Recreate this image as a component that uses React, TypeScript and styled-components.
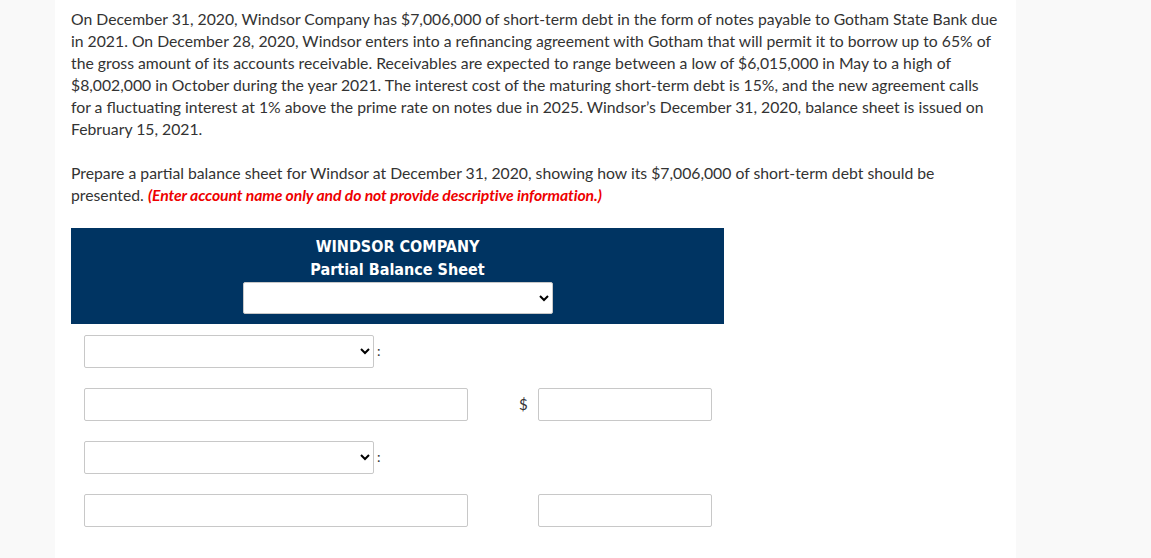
import React from "react";
import styled, { createGlobalStyle } from "styled-components";

const Global = createGlobalStyle`
  html, body { margin: 0; padding: 0; background: #f9f9f9; }
  body { font-family: Lato, "Open Sans", sans-serif; }
`;

const Page = styled.div`
  display: flex;
  min-height: 558px;
`;

const Panel = styled.main`
  margin-left: 55px;
  width: 961px;
  box-sizing: border-box;
  background: #ffffff;
  padding: 8px 15px 20px 16px;
  color: #333333;
  font-size: 15.75px;
  line-height: 22px;
`;

const Para = styled.p`
  margin: 0 0 22px 0;
`;

const Red = styled.span`
  color: #ee0000;
  font-weight: 700;
  font-style: italic;
  letter-spacing: -0.1px;
`;

const Sheet = styled.section`
  width: 653px;
`;

const Header = styled.div`
  background: #003462;
  height: 96px;
  box-sizing: border-box;
  padding-top: 7px;
  display: flex;
  flex-direction: column;
  align-items: center;
  color: #ffffff;
  font-family: "DejaVu Sans Condensed", "DejaVu Sans", sans-serif;
  font-weight: 700;
  font-size: 16px;
  line-height: 23px;
`;

const HeaderSelect = styled.select`
  margin-top: 1px;
  width: 310px;
  height: 32px;
  border: 1px solid #c8c8c8;
  border-radius: 2px;
  background: #fff;
  font-family: Lato, sans-serif;
`;

const Body = styled.div`
  padding: 11px 0 0 13px;
  display: flex;
  flex-direction: column;
  gap: 21px;
`;

const Row = styled.div`
  display: flex;
  align-items: center;
  height: 32px;
`;

const Select = styled.select`
  width: 290px;
  height: 33px;
  border: 1px solid #c8c8c8;
  border-radius: 2px;
  background: #fff;
  font-family: Lato, sans-serif;
`;

const Colon = styled.span`
  margin-left: 3px;
  font-size: 14px;
`;

const NameInput = styled.input`
  width: 384px;
  height: 33px;
  box-sizing: border-box;
  border: 1px solid #c8c8c8;
  border-radius: 2px;
  background: #fff;
`;

const Dollar = styled.span<{ $hidden?: boolean }>`
  width: 19px;
  margin-left: 51px;
  text-align: left;
  visibility: ${(p) => (p.$hidden ? "hidden" : "visible")};
  font-size: 15px;
`;

const AmountInput = styled.input`
  width: 174px;
  height: 33px;
  box-sizing: border-box;
  border: 1px solid #c8c8c8;
  border-radius: 2px;
  background: #fff;
`;

export default function App() {
  return (
    <Page>
      <Global />
      <Panel>
        <Para>
          On December 31, 2020, Windsor Company has $7,006,000 of short-term debt in the form of notes payable to Gotham State Bank due in 2021. On December 28, 2020, Windsor enters into a refinancing agreement with Gotham that will permit it to borrow up to 65% of the gross amount of its accounts receivable. Receivables are expected to range between a low of $6,015,000 in May to a high of $8,002,000 in October during the year 2021. The interest cost of the maturing short-term debt is 15%, and the new agreement calls for a fluctuating interest at 1% above the prime rate on notes due in 2025. Windsor’s December 31, 2020, balance sheet is issued on February 15, 2021.
        </Para>
        <Para>
          Prepare a partial balance sheet for Windsor at December 31, 2020, showing how its $7,006,000 of short-term debt should be presented. <Red>(Enter account name only and do not provide descriptive information.)</Red>
        </Para>
        <Sheet>
          <Header>
            <div>WINDSOR COMPANY</div>
            <div>Partial Balance Sheet</div>
            <HeaderSelect defaultValue="">
              <option value=""></option>
            </HeaderSelect>
          </Header>
          <Body>
            <Row>
              <Select defaultValue="">
                <option value=""></option>
              </Select>
              <Colon>:</Colon>
            </Row>
            <Row>
              <NameInput />
              <Dollar>$</Dollar>
              <AmountInput />
            </Row>
            <Row>
              <Select defaultValue="">
                <option value=""></option>
              </Select>
              <Colon>:</Colon>
            </Row>
            <Row>
              <NameInput />
              <Dollar $hidden>$</Dollar>
              <AmountInput />
            </Row>
          </Body>
        </Sheet>
      </Panel>
    </Page>
  );
}
